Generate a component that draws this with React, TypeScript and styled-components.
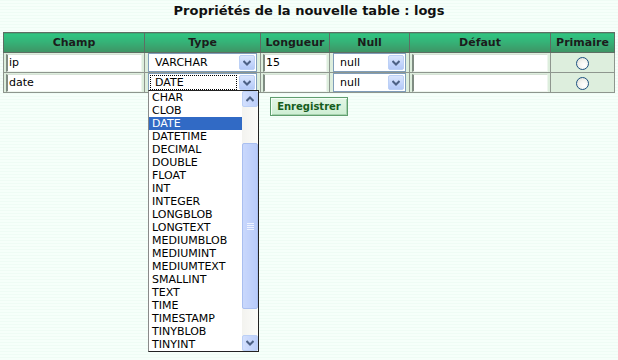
import React from "react";
import styled, { createGlobalStyle } from "styled-components";

const Global = createGlobalStyle`
  html, body { margin: 0; padding: 0; }
  body {
    font-family: "DejaVu Sans", Verdana, sans-serif;
    background: repeating-linear-gradient(to bottom, #effcf5 0px, #effcf5 1px, #f6fffa 1px, #f6fffa 3px);
    min-height: 360px;
    color: #111;
  }
`;

const Page = styled.div`
  width: 618px;
  height: 360px;
  overflow: hidden;
  padding-top: 3px;
  box-sizing: border-box;
`;

const Title = styled.h1`
  margin: 0 0 13px;
  font-size: 13px;
  line-height: 16px;
  font-weight: bold;
  text-align: center;
  color: #111;
`;

const Table = styled.table`
  margin-left: 3px;
  width: 611px;
  border-collapse: collapse;
  table-layout: fixed;
  border: 1px solid #5a5a5a;
`;

const Th = styled.th`
  height: 19px;
  padding: 0;
  font-size: 11px;
  font-weight: bold;
  color: #1c1c1c;
  text-align: center;
  border: 1px solid #5e6e64;
  background: linear-gradient(to bottom, #2ec682 0%, #35b277 45%, #3f9364 100%);
`;

const Td = styled.td<{ $center?: boolean }>`
  height: 19px;
  padding: 0 2px 0 2px;
  background: #ddeedd;
  border: 1px solid #8e968e;
  text-align: ${(p) => (p.$center ? "center" : "left")};
  vertical-align: middle;
`;

const TextInput = styled.input`
  display: block;
  box-sizing: border-box;
  width: 100%;
  height: 18px;
  margin: 0;
  padding: 0 0 0 1px;
  font-family: "DejaVu Sans", Verdana, sans-serif;
  font-size: 11px;
  color: #000;
  background: #fff;
  border: none;
  border-left: 2px solid #7f8c82;
  border-top: 1px solid #d6e2d6;
  border-right: 1px solid #eef6ee;
  border-bottom: 1px solid #eef6ee;
  outline: none;
`;

const SelectBox = styled.div`
  position: relative;
  box-sizing: border-box;
  height: 19px;
  margin: 0 1px;
  display: flex;
  align-items: center;
  background: #fff;
  border: 1px solid #7f9db9;
  font-size: 11px;
  color: #000;
`;

const SelectText = styled.span<{ $focused?: boolean }>`
  flex: 1;
  height: 15px;
  line-height: 15px;
  margin-left: 1px;
  padding-left: 5px;
  box-sizing: border-box;
  outline: ${(p) => (p.$focused ? "1px dotted #000" : "none")};
  outline-offset: -1px;
  white-space: nowrap;
`;

const ArrowBtn = styled.span`
  width: 16px;
  height: 15px;
  margin: 0 1px 0 2px;
  box-sizing: border-box;
  border: 1px solid #bcd0f6;
  border-radius: 2px;
  background: linear-gradient(to bottom, #dbe6fd 0%, #c2d4fb 60%, #b4c9f7 100%);
  display: flex;
  align-items: center;
  justify-content: center;
`;

const Chevron = ({ up }: { up?: boolean }) => (
  <svg width="8" height="6" viewBox="0 0 8 6">
    <path
      d={up ? "M0.5 5 L4 1.5 L7.5 5" : "M0.5 1 L4 4.5 L7.5 1"}
      fill="none"
      stroke="#4d6185"
      strokeWidth="2"
    />
  </svg>
);

const Radio = styled.span`
  display: inline-block;
  width: 13px;
  height: 13px;
  box-sizing: border-box;
  border-radius: 50%;
  border: 1px solid #1c5180;
  background: radial-gradient(circle at 65% 65%, #ffffff 0%, #f2f2ee 50%, #d8d8d0 100%);
  vertical-align: middle;
`;

const Anchor = styled.div`
  position: relative;
`;

const DropList = styled.div`
  position: absolute;
  left: 1px;
  top: calc(100% - 2px);
  width: 111px;
  height: 262px;
  box-sizing: border-box;
  border: 1px solid #222;
  border-left-color: #8a8a8a;
  background: #fff;
  display: flex;
  z-index: 5;
`;

const Options = styled.div`
  flex: 1;
  display: flex;
  flex-direction: column;
`;

const Option = styled.div<{ $sel?: boolean }>`
  height: 13px;
  line-height: 13px;
  font-size: 11px;
  padding-left: 3px;
  color: ${(p) => (p.$sel ? "#fff" : "#000")};
  background: ${(p) => (p.$sel ? "#316ac5" : "transparent")};
  white-space: nowrap;
`;

const ScrollBar = styled.div`
  width: 16px;
  display: flex;
  flex-direction: column;
  background: linear-gradient(to right, #f3f3ef, #fbfbf9);
`;

const ScrollBtn = styled.div`
  height: 16px;
  box-sizing: border-box;
  border: 1px solid #bcd0f6;
  border-radius: 2px;
  background: linear-gradient(to right, #d3e0fd, #bccefa);
  display: flex;
  align-items: center;
  justify-content: center;
`;

const Track = styled.div`
  flex: 1;
  display: flex;
  flex-direction: column;
  padding-top: 36px;
  padding-bottom: 26px;
`;

const Thumb = styled.div`
  flex: 1;
  box-sizing: border-box;
  border: 1px solid #a9bff0;
  border-radius: 2px;
  background: linear-gradient(to right, #c9d8fc, #b8cbfa);
  display: flex;
  align-items: center;
  justify-content: center;
`;

const Grip = () => (
  <svg width="7" height="7" viewBox="0 0 7 7">
    {[0.5, 2.5, 4.5, 6.5].map((y) => (
      <line key={y} x1="0" x2="7" y1={y} y2={y} stroke="#eef3ff" strokeWidth="1" />
    ))}
  </svg>
);

const Actions = styled.div`
  display: flex;
  justify-content: center;
  margin-top: 4px;
`;

const SaveButton = styled.button`
  width: 78px;
  height: 19px;
  padding: 0;
  box-sizing: border-box;
  font-family: "DejaVu Sans", Verdana, sans-serif;
  font-size: 10px;
  font-weight: bold;
  color: #145c1c;
  background: linear-gradient(to bottom, #e4f6e6, #cdeed3);
  border: 1px solid #5f9e6e;
  box-shadow: inset 1px 1px 0 #f4fff6, inset -1px -1px 0 #a6d2ae;
`;

const types = [
  "CHAR", "CLOB", "DATE", "DATETIME", "DECIMAL", "DOUBLE", "FLOAT", "INT",
  "INTEGER", "LONGBLOB", "LONGTEXT", "MEDIUMBLOB", "MEDIUMINT", "MEDIUMTEXT",
  "SMALLINT", "TEXT", "TIME", "TIMESTAMP", "TINYBLOB", "TINYINT",
];

const Select = ({ value, focused }: { value: string; focused?: boolean }) => (
  <SelectBox>
    <SelectText $focused={focused}>{value}</SelectText>
    <ArrowBtn>
      <Chevron />
    </ArrowBtn>
  </SelectBox>
);

export default function App() {
  return (
    <Page>
      <Global />
      <Title>Propriétés de la nouvelle table : logs</Title>
      <Table>
        <colgroup>
          <col style={{ width: 141 }} />
          <col style={{ width: 116 }} />
          <col style={{ width: 69 }} />
          <col style={{ width: 80 }} />
          <col style={{ width: 141 }} />
          <col style={{ width: 64 }} />
        </colgroup>
        <thead>
          <tr>
            <Th>Champ</Th>
            <Th>Type</Th>
            <Th>Longueur</Th>
            <Th>Null</Th>
            <Th>Défaut</Th>
            <Th>Primaire</Th>
          </tr>
        </thead>
        <tbody>
          <tr>
            <Td><TextInput defaultValue="ip" /></Td>
            <Td><Select value="VARCHAR" /></Td>
            <Td><TextInput defaultValue="15" /></Td>
            <Td><Select value="null" /></Td>
            <Td><TextInput defaultValue="" /></Td>
            <Td $center><Radio /></Td>
          </tr>
          <tr>
            <Td><TextInput defaultValue="date" /></Td>
            <Td>
              <Anchor>
                <Select value="DATE" focused />
                <DropList>
                  <Options>
                    {types.map((t) => (
                      <Option key={t} $sel={t === "DATE"}>{t}</Option>
                    ))}
                  </Options>
                  <ScrollBar>
                    <ScrollBtn><Chevron up /></ScrollBtn>
                    <Track>
                      <Thumb><Grip /></Thumb>
                    </Track>
                    <ScrollBtn><Chevron /></ScrollBtn>
                  </ScrollBar>
                </DropList>
              </Anchor>
            </Td>
            <Td><TextInput defaultValue="" /></Td>
            <Td><Select value="null" /></Td>
            <Td><TextInput defaultValue="" /></Td>
            <Td $center><Radio /></Td>
          </tr>
        </tbody>
      </Table>
      <Actions>
        <SaveButton>Enregistrer</SaveButton>
      </Actions>
    </Page>
  );
}
